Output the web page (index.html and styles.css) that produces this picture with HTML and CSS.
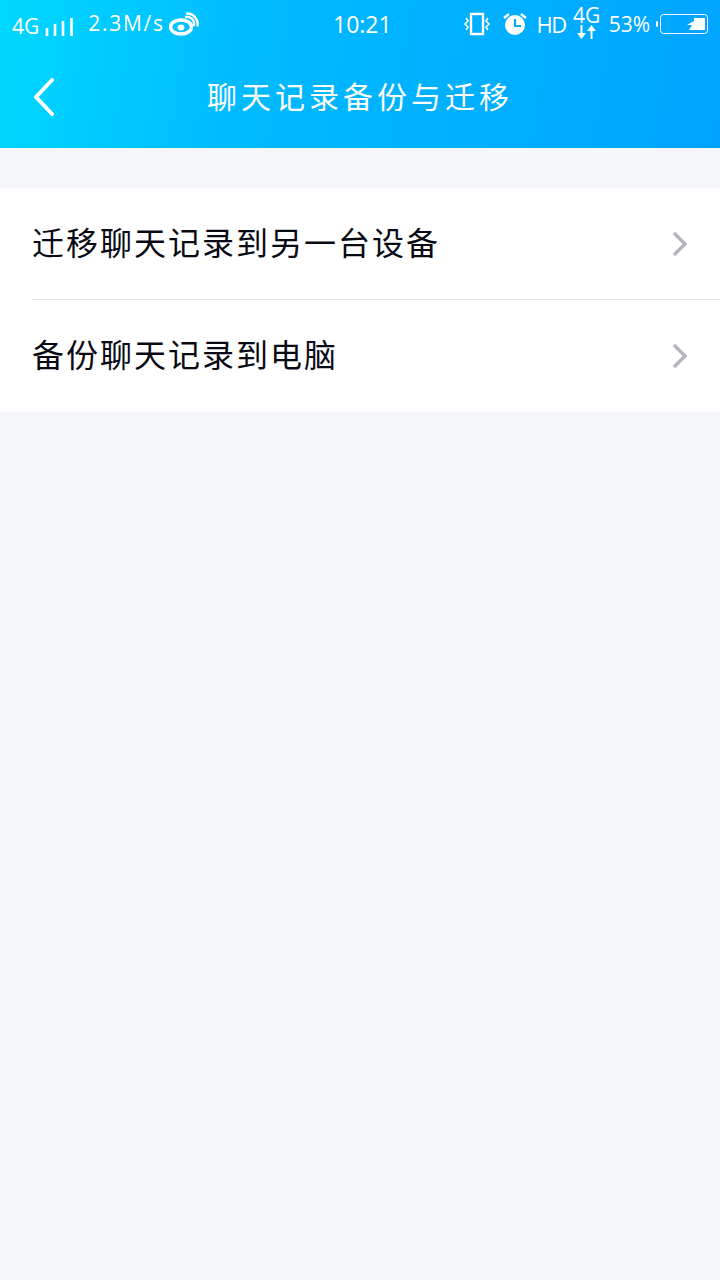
FILE: index.html
```html
<!DOCTYPE html>
<html lang="zh-CN">
<head>
  <meta charset="UTF-8" />
  <meta name="viewport" content="width=device-width, initial-scale=1.0"/>
  <title>聊天记录备份与迁移</title>
  <link rel="stylesheet" href="styles.css">
</head>
<body>
  <header class="header">
    <div class="status">
      <div class="status-left">
        <span class="net">4G</span>
        <svg class="bars" width="28" height="18" viewBox="0 0 28 18"><path d="M2 10v8M10 6v12M18 3v15M26.500 0v18" stroke="#fff" stroke-width="2.600" fill="none"/></svg>
        <span class="speed">2.3M/s</span>
        <svg class="weibo" width="30" height="24" viewBox="0 0 30 24">
          <ellipse cx="12" cy="15" rx="10.500" ry="7" fill="none" stroke="#fff" stroke-width="3.500"/>
          <ellipse cx="12" cy="15.500" rx="3.500" ry="3" fill="#fff"/>
          <path d="M17 5a7 7 0 0 1 8 8M18 1.500a10.500 10.500 0 0 1 10.500 12" fill="none" stroke="#fff" stroke-width="2.400" stroke-linecap="round"/>
        </svg>
      </div>
      <span class="clock">10:21</span>
      <div class="status-right">
        <svg width="28" height="24" viewBox="0 0 28 24">
          <rect x="8" y="2" width="12" height="20" fill="none" stroke="#fff" stroke-width="2.400"/>
          <path d="M3 6l2 3-3 3 3 3-2 3M25 6l-2 3 3 3-3 3 2 3" fill="none" stroke="#fff" stroke-width="1.600"/>
        </svg>
        <svg class="alarm" width="24" height="24" viewBox="0 0 24 24">
          <circle cx="12" cy="13" r="10" fill="#fff"/>
          <path d="M12 7v7h6" fill="none" stroke="#08a8fb" stroke-width="2.200"/>
          <path d="M1 6l5-4M23 6l-5-4" stroke="#fff" stroke-width="2.400"/>
        </svg>
        <span class="hd">HD</span>
        <div class="net-stack">
          <span class="net-top">4G</span>
          <svg width="20" height="14" viewBox="0 0 20 14"><path d="M4.500 0v10M14.500 14V4" stroke="#fff" stroke-width="2"/><path d="M0 8h9l-4.500 6zM10 6h9l-4.500-6z" fill="#fff"/></svg>
        </div>
        <span class="pct">53%</span>
        <svg class="battery" width="52" height="20" viewBox="0 0 52 20">
          <rect x="0" y="7" width="2" height="6" rx="1" fill="#fff"/>
          <rect x="4.500" y="0.500" width="47" height="19" rx="3" fill="none" stroke="#fff"/>
          <path d="M38 4h11v12H33l3-5h-5l7-4z" fill="#fff"/>
        </svg>
      </div>
    </div>
    <div class="toolbar">
      <svg class="back" width="22" height="38" viewBox="0 0 22 38"><path d="M19 2L3 19l16 17" fill="none" stroke="#fff" stroke-width="4" stroke-linecap="round" stroke-linejoin="round"/></svg>
      <h1 class="title">聊天记录备份与迁移</h1>
    </div>
  </header>

  <ul class="list">
    <li class="row">
      <div class="row-inner">
        <span class="row-text">迁移聊天记录到另一台设备</span>
        <svg class="chevron" width="16" height="26" viewBox="0 0 16 26"><path d="M2 2l11 11L2 24" fill="none" stroke="#b2b6c1" stroke-width="3.400"/></svg>
      </div>
    </li>
    <li class="row">
      <div class="row-inner">
        <span class="row-text">备份聊天记录到电脑</span>
        <svg class="chevron" width="16" height="26" viewBox="0 0 16 26"><path d="M2 2l11 11L2 24" fill="none" stroke="#b2b6c1" stroke-width="3.400"/></svg>
      </div>
    </li>
  </ul>
</body>
</html>
```

FILE: styles.css
```css
body {
  margin: 0;
  min-height: 1280px;
  background: #f4f6fa;
  font-family: "Noto Sans CJK SC", "Noto Sans", sans-serif;
}

.header {
  height: 148px;
  background: linear-gradient(100deg, #00d8ff 0%, #00baff 35%, #00a4ff 100%);
  color: white;
}

.status {
  height: 48px;
  padding: 0 12px;
  display: flex;
  align-items: center;
  justify-content: space-between;
  position: relative;
  font-family: "Open Sans", sans-serif;
}

.status-left,
.status-right {
  display: flex;
  align-items: center;
}

.net {
  font-size: 21px;
  margin-top: 4px;
}

.bars {
  margin-left: 6px;
  margin-top: 5px;
}

.speed {
  font-size: 21px;
  letter-spacing: 1.7px;
  margin-left: 15px;
  margin-top: -2px;
}

.weibo {
  margin-left: 4px;
}

.clock {
  position: absolute;
  left: 333px;
  font-size: 23px;
}

.alarm {
  margin-left: 12px;
}

.hd {
  font-size: 22px;
  margin-left: 9px;
  letter-spacing: -1.500px;
}

.net-stack {
  margin-left: 7px;
  width: 28px;
  display: flex;
  flex-direction: column;
  align-items: center;
  margin-top: -4px;
}

.net-top {
  font-size: 21px;
  line-height: 20px;
}

.pct {
  font-size: 21px;
  margin-left: 8px;
}

.battery {
  margin-left: 6px;
}

.toolbar {
  height: 100px;
  display: flex;
  align-items: center;
  justify-content: center;
  position: relative;
}

.back {
  position: absolute;
  left: 33px;
  top: 30px;
}

.title {
  margin: 0 0 6px;
  font-size: 30px;
  font-weight: 400;
  letter-spacing: 4px;
}

.list {
  list-style: none;
  margin: 40px 0 0;
  padding: 0;
  background: white;
}

.row {
  padding-left: 32px;
}

.row-inner {
  height: 112px;
  display: flex;
  align-items: center;
  justify-content: space-between;
  padding-right: 32px;
}

.row:first-child .row-inner {
  border-bottom: 1px solid #e6e7ea;
  height: 111px;
}

.row-text {
  font-size: 32px;
  color: #0a0a14;
  letter-spacing: 2px;
  margin-bottom: 6px;
}
```
